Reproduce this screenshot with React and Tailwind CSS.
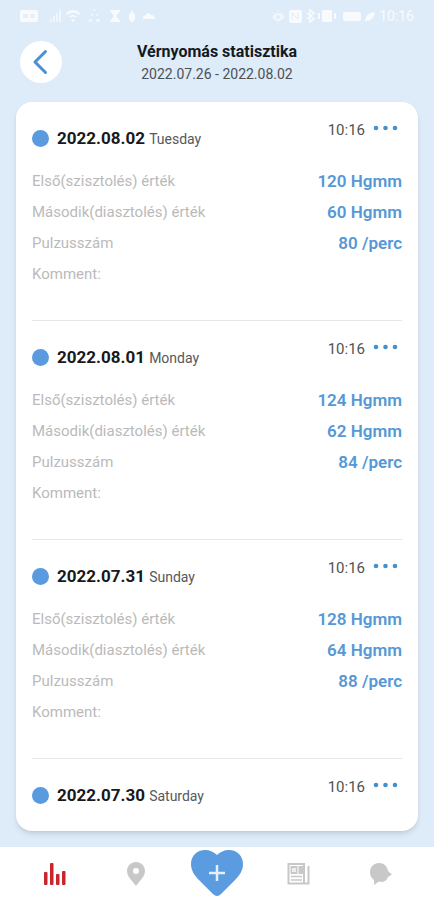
import React from 'react';

const entries = [
  { date: '2022.08.02', day: 'Tuesday', time: '10:16', systolic: 120, diastolic: 60, pulse: 80 },
  { date: '2022.08.01', day: 'Monday', time: '10:16', systolic: 124, diastolic: 62, pulse: 84 },
  { date: '2022.07.31', day: 'Sunday', time: '10:16', systolic: 128, diastolic: 64, pulse: 88 },
  { date: '2022.07.30', day: 'Saturday', time: '10:16' },
];

function StatusBar() {
  return (
    <div className="flex h-8 items-center justify-between px-5 text-white/80">
      <svg width="136" height="16" viewBox="0 0 136 16" fill="currentColor" aria-hidden="true">
        <rect x="0" y="2" width="18" height="12" rx="2" />
        <path d="M3 6h5v4H3zM10 6h5v4h-5z" fill="#e6f0fa" />
        <path d="M30 11h2v3h-2zM33 8h2v6h-2zM36 5h2v9h-2zM39 2h2v12h-2z" opacity=".6" />
        <path d="M46 5q7-6 14 0l-1 2q-6-5-12 0zM49 9q4-4 8 0l-1 1q-3-3-6 0zM51 12q2-2 4 0l-2 2z" />
        <path d="M72 3l2-2 2 2M71 6h2v2h-2zM76 6h2v2h-2zM69 11h3v3h-3zM76 11h4v3h-4z" opacity=".6" />
        <path d="M90 2h10v1l-4 5 4 5v1H90v-1l4-5-4-5z" />
        <path d="M112 2l3 5v4l-2 3h-2l-2-3V7z" />
        <path d="M123 11q-1-3 3-4 2-4 5 0 4 0 4 4z" />
      </svg>
      <div className="flex items-center">
        <svg width="110" height="16" viewBox="0 0 110 16" fill="currentColor" aria-hidden="true">
          <path d="M3 9q6-8 13 0-7 8-13 0z" opacity=".7" />
          <path d="M9 2v2M4 4l2 2M14 4l-2 2M9 13v2" stroke="currentColor" opacity=".7" />
          <circle cx="9" cy="9" r="2" fill="#deebf8" />
          <rect x="20" y="2" width="13" height="13" rx="2" />
          <path d="M23 11V5l6 6V5" fill="none" stroke="#deebf8" />
          <path d="M38 5l7 6-4 3V2l4 3-7 6" fill="none" stroke="currentColor" strokeWidth="1.500" />
          <rect x="53" y="2" width="10" height="12" rx="1" />
          <path d="M50 5v6M66 5v6" stroke="currentColor" strokeWidth="2" />
          <rect x="74" y="4" width="18" height="9" rx="2" />
          <path d="M96 13q0-8 10-9-1 9-10 9z" />
        </svg>
        <span className="text-sm leading-4">10:16</span>
      </div>
    </div>
  );
}

function Header() {
  return (
    <header className="grid grid-cols-[42px_1fr_42px] items-center px-5 pt-2">
      <button
        type="button"
        aria-label="Vissza"
        className="flex size-[42px] items-center justify-center rounded-full bg-white"
      >
        <svg width="42" height="42" viewBox="0 0 42 42" fill="none" aria-hidden="true">
          <path
            d="M25.500 10.500L15 21L25.500 31.500"
            stroke="#4a90d3"
            strokeWidth="3"
            strokeLinecap="round"
            strokeLinejoin="round"
          />
        </svg>
      </button>
      <div className="text-center">
        <h1 className="text-base leading-6 font-bold text-[#15191d]">Vérnyomás statisztika</h1>
        <p className="text-sm leading-5 text-[#4b5157]">2022.07.26 - 2022.08.02</p>
      </div>
    </header>
  );
}

function Value({ label, value }) {
  return (
    <div className="flex h-[31px] items-center justify-between">
      <dt className="text-[15px] text-[#bababa]">{label}</dt>
      <dd className="text-[17px] font-semibold text-[#5598d6]">{value}</dd>
    </div>
  );
}

function Entry({ entry }) {
  return (
    <li className="border-t border-[#e6e6e6] pt-4 first:border-t-0">
      <div className="flex items-start justify-between">
        <div className="flex items-center gap-2 pt-2">
          <span className="size-[17px] rounded-full bg-[#5a9ade]" />
          <h2 className="text-[17px] leading-6 font-bold text-[#17191b]">
            {entry.date} <span className="text-sm font-normal text-[#55585b]">{entry.day}</span>
          </h2>
        </div>
        <div className="flex items-start gap-2">
          <time className="text-[15px] leading-6 text-[#505356]">{entry.time}</time>
          <button type="button" aria-label="Műveletek" className="flex h-5 items-center pr-1">
            <svg width="25" height="6" viewBox="0 0 25 6" fill="#4390cf" aria-hidden="true">
              <circle cx="3" cy="3" r="2.300" />
              <circle cx="12.500" cy="3" r="2.300" />
              <circle cx="22" cy="3" r="2.300" />
            </svg>
          </button>
        </div>
      </div>
      {entry.systolic && (
        <dl className="pt-4 pb-[30px]">
          <Value label="Első(szisztolés) érték" value={`${entry.systolic} Hgmm`} />
          <Value label="Második(diasztolés) érték" value={`${entry.diastolic} Hgmm`} />
          <Value label="Pulzusszám" value={`${entry.pulse} /perc`} />
          <Value label="Komment:" value="" />
        </dl>
      )}
    </li>
  );
}

function NavBar() {
  return (
    <nav className="grid h-[53px] grid-cols-5 justify-items-center bg-white px-[14px]">
      <a href="#stats" aria-label="Statisztika" className="flex items-center">
        <svg width="22" height="24" viewBox="0 0 22 24" fill="#c9252d" aria-hidden="true">
          <rect x="0" y="10" width="3.500" height="13" rx="1" />
          <rect x="6" y="1" width="3.500" height="22" rx="1" />
          <rect x="12" y="12" width="3.500" height="11" rx="1" />
          <rect x="18" y="9" width="3.500" height="14" rx="1" />
        </svg>
      </a>
      <a href="#map" aria-label="Térkép" className="flex items-center">
        <svg width="18" height="24" viewBox="0 0 18 24" fill="#c8c8c8" aria-hidden="true">
          <path
            fillRule="evenodd"
            d="M9 0C4 0 0 4 0 9c0 6 5 9 9 15 4-6 9-9 9-15 0-5-4-9-9-9zm0 6a3 3 0 1 1 0 6 3 3 0 0 1 0-6z"
          />
        </svg>
      </a>
      <a href="#new" aria-label="Új mérés" className="flex items-center">
        <svg width="52" height="48" viewBox="0 0 52 48" aria-hidden="true">
          <path
            d="M26 5C23 2 19 0 14 0C6 0 0 6 0 14C0 21 4 26 8 30L22 44Q26 48 30 44L44 30C48 26 52 21 52 14C52 6 46 0 38 0C33 0 29 2 26 5Z"
            fill="#5b9bdf"
          />
          <path d="M26 15V31M18 23H34" stroke="#e4f0fb" strokeWidth="2.500" />
        </svg>
      </a>
      <a href="#news" aria-label="Hírek" className="flex items-center">
        <svg width="23" height="22" viewBox="0 0 23 22" fill="none" stroke="#c8c8c8" aria-hidden="true">
          <path d="M1.500 1H17V20.500H1.500ZM17 20.500H21.500V3" strokeWidth="2" />
          <path d="M3.500 3h7v8h-7zM11.500 3h5v8h-5z" fill="#c8c8c8" stroke="none" />
          <path d="M5 5h4v4H5z" fill="#eee" stroke="none" />
          <path d="M4 13.500h11M4 17h11" strokeWidth="1.500" />
        </svg>
      </a>
      <a href="#chat" aria-label="Üzenetek" className="flex items-center">
        <svg width="26" height="22" viewBox="0 0 26 22" fill="#c8c8c8" aria-hidden="true">
          <path d="M13 0C18 0 21 3 22 8L26 11.500L22 14C21 17 19 18.500 16 19L13 18.500L8 22V17C5 15 4 12 4 9C4 4 8 0 13 0Z" />
        </svg>
      </a>
    </nav>
  );
}

export default function App() {
  return (
    <div className="flex h-screen flex-col overflow-hidden bg-[#deebf8] font-['Roboto',sans-serif]">
      <StatusBar />
      <Header />
      <main className="min-h-0 flex-1 px-4 pt-[18px] pb-4">
        <ul className="h-full overflow-hidden rounded-2xl bg-white px-4 shadow-md">
          {entries.map((entry) => (
            <Entry key={entry.date} entry={entry} />
          ))}
        </ul>
      </main>
      <NavBar />
    </div>
  );
}
